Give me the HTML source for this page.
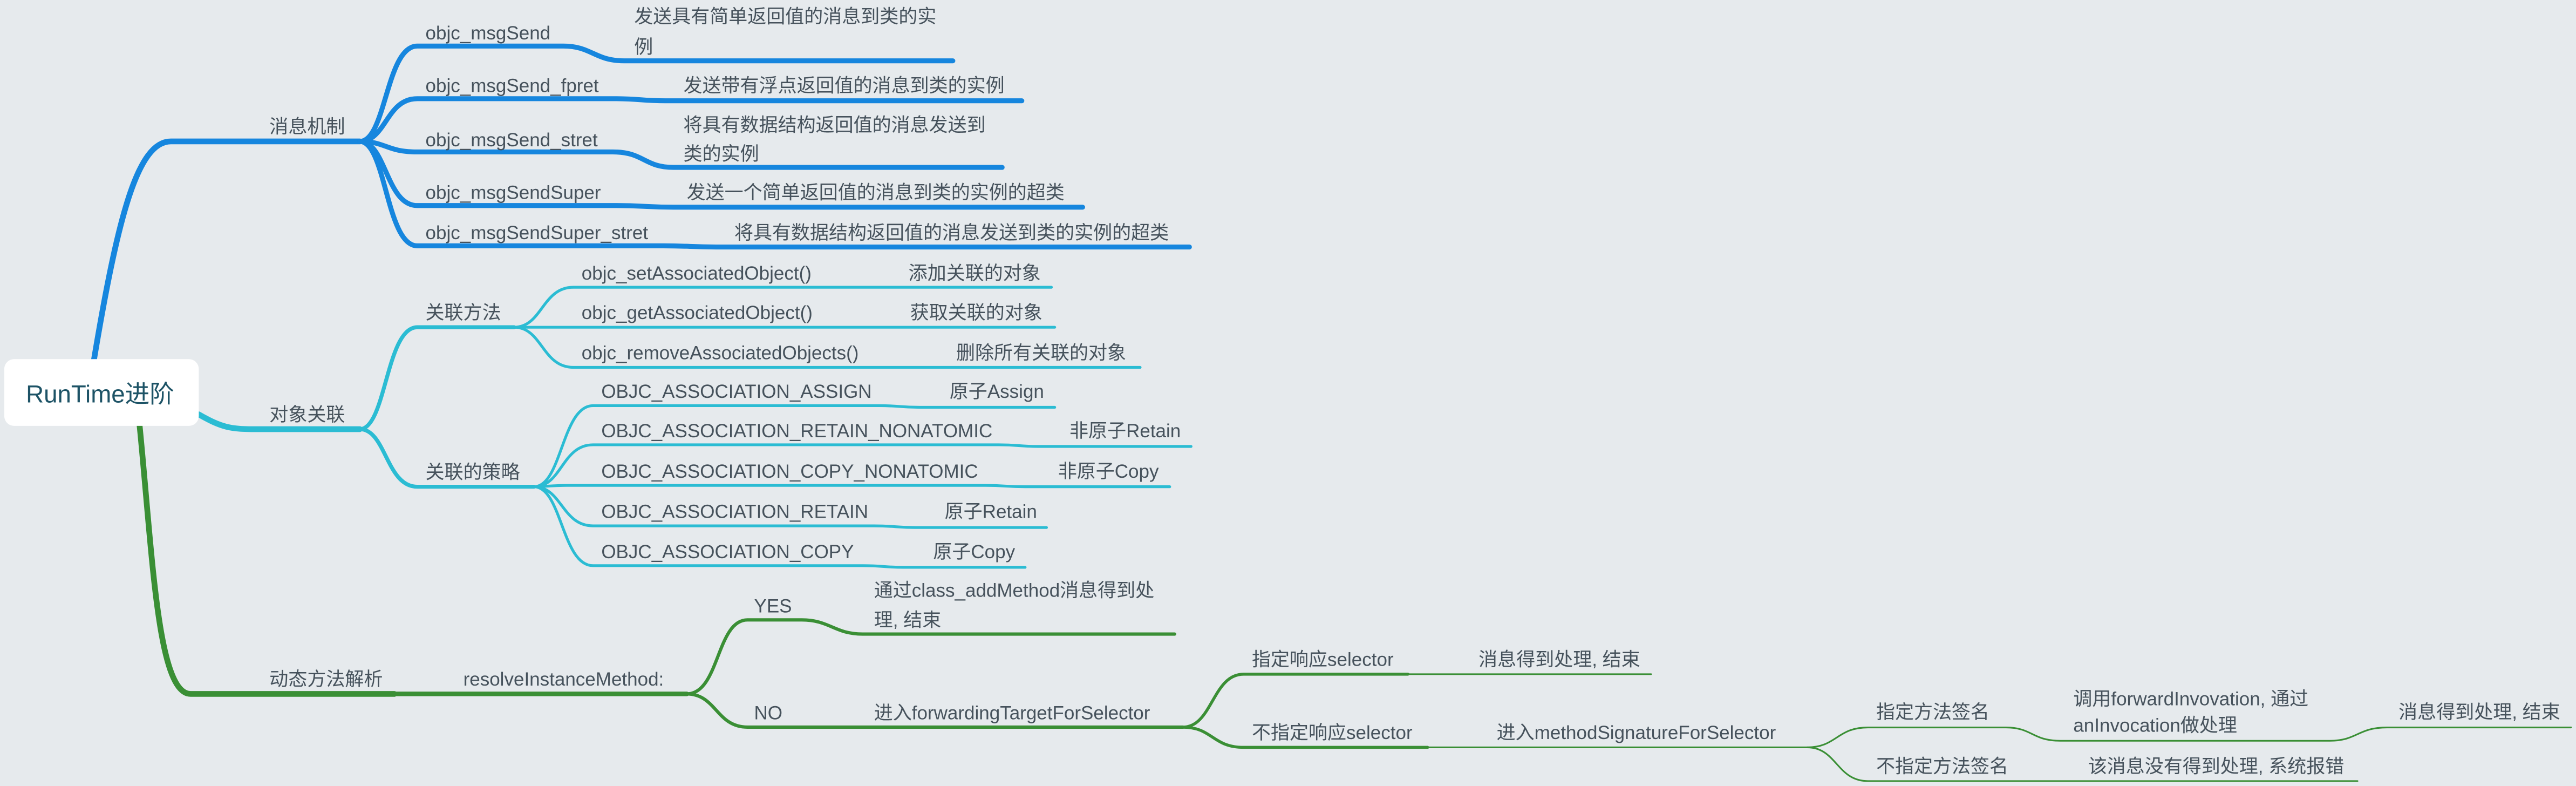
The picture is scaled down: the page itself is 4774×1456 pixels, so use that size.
<!DOCTYPE html>
<html><head><meta charset="utf-8"><style>
html,body{margin:0;padding:0;background:#e6eaed;}
svg{display:block;}
text{font-family:"Liberation Sans","Noto Sans CJK SC",sans-serif;font-size:11.5px;fill:#46525c;}
</style></head><body>
<svg width="4774" height="1456" viewBox="0 0 1568 478" preserveAspectRatio="none" xmlns="http://www.w3.org/2000/svg">
<rect width="1568" height="478" fill="#e6eaed"/>
<g fill="none" stroke-linecap="round">
<!-- blue -->
<g stroke="#1686de">
<path d="M57 220 C72 130 84 86 104 86 L219 86" stroke-width="3.5"/>
<path d="M219 86 C235 86 235 28 254 28 L343 28 C360 28 362 37 380 37 L580 37" stroke-width="3"/>
<path d="M219 86 C235 86 235 60 254 60 L373 60 C390 60 390 61.3 405 61.3 L622 61.3" stroke-width="3"/>
<path d="M219 86 C235 86 235 92.4 254 92.4 L373 92.4 C392 92.4 392 101.8 410 101.8 L610 101.8" stroke-width="3"/>
<path d="M219 86 C235 86 235 125 254 125 L375 125 C392 125 392 126 410 126 L659 126" stroke-width="3"/>
<path d="M219 86 C235 86 235 149.5 254 149.5 L404 149.5 C420 149.5 420 150.2 436 150.2 L724 150.2" stroke-width="3"/>
</g>
<!-- cyan -->
<g stroke="#2bbcd3">
<path d="M121 252 C135 260 140 261 156 261 L219 261" stroke-width="3.5"/>
<path d="M219 261 C235 261 235 199 254 199 L313 199" stroke-width="2.4"/>
<path d="M219 261 C235 261 235 296 254 296 L325 296" stroke-width="2.4"/>
<path d="M313 199 C330 199 330 174.7 349 174.7 L510 174.7 L640 174.7" stroke-width="1.7"/>
<path d="M313 199 L642 199" stroke-width="1.7"/>
<path d="M313 199 C330 199 330 223.4 349 223.4 L540 223.4 L694 223.4" stroke-width="1.7"/>
<path d="M325 296 C342 296 342 246.7 361 246.7 L535 246.7 C548 246.7 548 247.7 560 247.7 L642 247.7" stroke-width="1.7"/>
<path d="M325 296 C342 296 342 270.5 361 270.5 L608 270.5 C620 270.5 620 271.5 632 271.5 L725 271.5" stroke-width="1.7"/>
<path d="M325 296 C332 296 335 295.2 345 295.2 L600 295.2 C612 295.2 612 296 624 296 L712 296" stroke-width="1.7"/>
<path d="M325 296 C342 296 342 319.8 361 319.8 L532 319.8 C545 319.8 545 320.8 557 320.8 L637 320.8" stroke-width="1.7"/>
<path d="M325 296 C342 296 342 344 361 344 L525 344 C538 344 538 345 550 345 L624 345" stroke-width="1.7"/>
</g>
<!-- green -->
<g stroke="#3a8f35">
<path d="M85 259 C93 340 96 422 116 422 L240 422" stroke-width="3.5"/>
<path d="M240 422 L418 422" stroke-width="2.8"/>
<path d="M418 422 C438 422 436 377 455 377 L488 377 C505 377 508 385.6 525 385.6 L715 385.6" stroke-width="2"/>
<path d="M418 422 C436 422 436 442.2 455 442.2 L488 442.2 L720 442.2" stroke-width="2"/>
<path d="M720 442.2 C738 442.2 738 410 757 410 L857 410" stroke-width="1.8"/>
<path d="M857 410 L1005 410" stroke-width="1"/>
<path d="M720 442.2 C738 442.2 738 454.5 757 454.5 L869 454.5" stroke-width="1.8"/>
<path d="M869 454.5 L1100 454.5" stroke-width="1"/>
<path d="M1100 454.5 C1118 454.5 1118 442.4 1137 442.4 L1221 442.4 C1237 442.4 1237 450.5 1254 450.5 L1418 450.5 C1435 450.5 1435 442.4 1453 442.4 L1565 442.4" stroke-width="1"/>
<path d="M1100 454.5 C1118 454.5 1118 475 1137 475 L1435 475" stroke-width="1"/>
</g>
</g>
<!-- root -->
<rect x="2.6" y="218.4" width="118.4" height="40.6" rx="6" fill="#fff"/>
<text x="15.8" y="244.7" style="font-size:15px;fill:#1d5366">RunTime进阶</text>
<!-- blue labels -->
<text x="164" y="81">消息机制</text>
<text x="259" y="24">objc_msgSend</text>
<text x="386" y="14">发送具有简单返回值的消息到类的实</text>
<text x="386" y="32.5">例</text>
<text x="259" y="56">objc_msgSend_fpret</text>
<text x="416" y="56">发送带有浮点返回值的消息到类的实例</text>
<text x="259" y="89">objc_msgSend_stret</text>
<text x="416" y="80">将具有数据结构返回值的消息发送到</text>
<text x="416" y="97.5">类的实例</text>
<text x="259" y="121">objc_msgSendSuper</text>
<text x="418" y="121">发送一个简单返回值的消息到类的实例的超类</text>
<text x="259" y="145.5">objc_msgSendSuper_stret</text>
<text x="447" y="145.5">将具有数据结构返回值的消息发送到类的实例的超类</text>
<!-- cyan labels -->
<text x="164" y="256">对象关联</text>
<text x="259" y="194">关联方法</text>
<text x="259" y="291">关联的策略</text>
<text x="354" y="170">objc_setAssociatedObject()</text>
<text x="553" y="170">添加关联的对象</text>
<text x="354" y="194">objc_getAssociatedObject()</text>
<text x="554" y="194">获取关联的对象</text>
<text x="354" y="218.5">objc_removeAssociatedObjects()</text>
<text x="582" y="218.5">删除所有关联的对象</text>
<text x="366" y="242">OBJC_ASSOCIATION_ASSIGN</text>
<text x="578" y="242">原子Assign</text>
<text x="366" y="266">OBJC_ASSOCIATION_RETAIN_NONATOMIC</text>
<text x="651" y="266">非原子Retain</text>
<text x="366" y="290.5">OBJC_ASSOCIATION_COPY_NONATOMIC</text>
<text x="644" y="290.5">非原子Copy</text>
<text x="366" y="315">OBJC_ASSOCIATION_RETAIN</text>
<text x="575" y="315">原子Retain</text>
<text x="366" y="339.5">OBJC_ASSOCIATION_COPY</text>
<text x="568" y="339.5">原子Copy</text>
<!-- green labels -->
<text x="164" y="417">动态方法解析</text>
<text x="282" y="417">resolveInstanceMethod:</text>
<text x="459" y="372.5">YES</text>
<text x="532" y="363">通过class_addMethod消息得到处</text>
<text x="532" y="381">理, 结束</text>
<text x="459" y="437.5">NO</text>
<text x="532" y="437.5">进入forwardingTargetForSelector</text>
<text x="762" y="405">指定响应selector</text>
<text x="900" y="405">消息得到处理, 结束</text>
<text x="762" y="449.5">不指定响应selector</text>
<text x="911" y="449.5">进入methodSignatureForSelector</text>
<text x="1142" y="437">指定方法签名</text>
<text x="1262" y="429">调用forwardInvovation, 通过</text>
<text x="1262" y="445">anInvocation做处理</text>
<text x="1460" y="437">消息得到处理, 结束</text>
<text x="1142" y="470">不指定方法签名</text>
<text x="1271" y="470">该消息没有得到处理, 系统报错</text>
</svg>
</body></html>
